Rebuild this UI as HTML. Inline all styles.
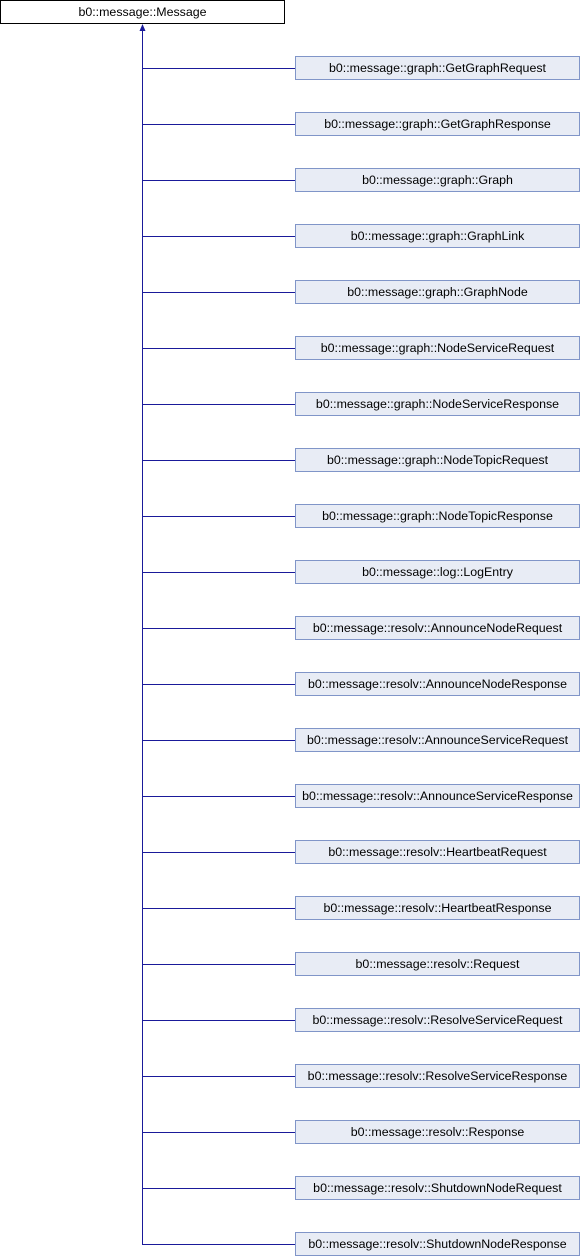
<!DOCTYPE html>
<html><head><meta charset="utf-8"><style>
html,body{margin:0;padding:0;background:#fff;width:580px;height:1256px;overflow:hidden}
.b{position:absolute;left:295px;width:283px;height:22px;background:#e8ecf5;border:1px solid #8095c8;font:12.4px "Liberation Sans",sans-serif;color:#000;text-align:center;line-height:22px;white-space:nowrap}
.h{position:absolute;left:142px;width:153px;height:1px;background:#1a1a9a}
</style></head><body>
<div style="position:absolute;left:0;top:0;width:283px;height:22px;border:1px solid #000;font:12.4px 'Liberation Sans',sans-serif;text-align:center;line-height:22px">b0::message::Message</div>
<div style="position:absolute;left:142px;top:30px;width:1px;height:1215px;background:#1a1a9a"></div>
<svg style="position:absolute;left:138px;top:23px" width="9" height="9"><polygon points="4.5,1 1.5,8 7.5,8" fill="#1a1a9a"/></svg>
<div class="h" style="top:68px"></div><div class="b" style="top:56px">b0::message::graph::GetGraphRequest</div>
<div class="h" style="top:124px"></div><div class="b" style="top:112px">b0::message::graph::GetGraphResponse</div>
<div class="h" style="top:180px"></div><div class="b" style="top:168px">b0::message::graph::Graph</div>
<div class="h" style="top:236px"></div><div class="b" style="top:224px">b0::message::graph::GraphLink</div>
<div class="h" style="top:292px"></div><div class="b" style="top:280px">b0::message::graph::GraphNode</div>
<div class="h" style="top:348px"></div><div class="b" style="top:336px">b0::message::graph::NodeServiceRequest</div>
<div class="h" style="top:404px"></div><div class="b" style="top:392px">b0::message::graph::NodeServiceResponse</div>
<div class="h" style="top:460px"></div><div class="b" style="top:448px">b0::message::graph::NodeTopicRequest</div>
<div class="h" style="top:516px"></div><div class="b" style="top:504px">b0::message::graph::NodeTopicResponse</div>
<div class="h" style="top:572px"></div><div class="b" style="top:560px">b0::message::log::LogEntry</div>
<div class="h" style="top:628px"></div><div class="b" style="top:616px">b0::message::resolv::AnnounceNodeRequest</div>
<div class="h" style="top:684px"></div><div class="b" style="top:672px">b0::message::resolv::AnnounceNodeResponse</div>
<div class="h" style="top:740px"></div><div class="b" style="top:728px">b0::message::resolv::AnnounceServiceRequest</div>
<div class="h" style="top:796px"></div><div class="b" style="top:784px">b0::message::resolv::AnnounceServiceResponse</div>
<div class="h" style="top:852px"></div><div class="b" style="top:840px">b0::message::resolv::HeartbeatRequest</div>
<div class="h" style="top:908px"></div><div class="b" style="top:896px">b0::message::resolv::HeartbeatResponse</div>
<div class="h" style="top:964px"></div><div class="b" style="top:952px">b0::message::resolv::Request</div>
<div class="h" style="top:1020px"></div><div class="b" style="top:1008px">b0::message::resolv::ResolveServiceRequest</div>
<div class="h" style="top:1076px"></div><div class="b" style="top:1064px">b0::message::resolv::ResolveServiceResponse</div>
<div class="h" style="top:1132px"></div><div class="b" style="top:1120px">b0::message::resolv::Response</div>
<div class="h" style="top:1188px"></div><div class="b" style="top:1176px">b0::message::resolv::ShutdownNodeRequest</div>
<div class="h" style="top:1244px"></div><div class="b" style="top:1232px">b0::message::resolv::ShutdownNodeResponse</div>
</body></html>
